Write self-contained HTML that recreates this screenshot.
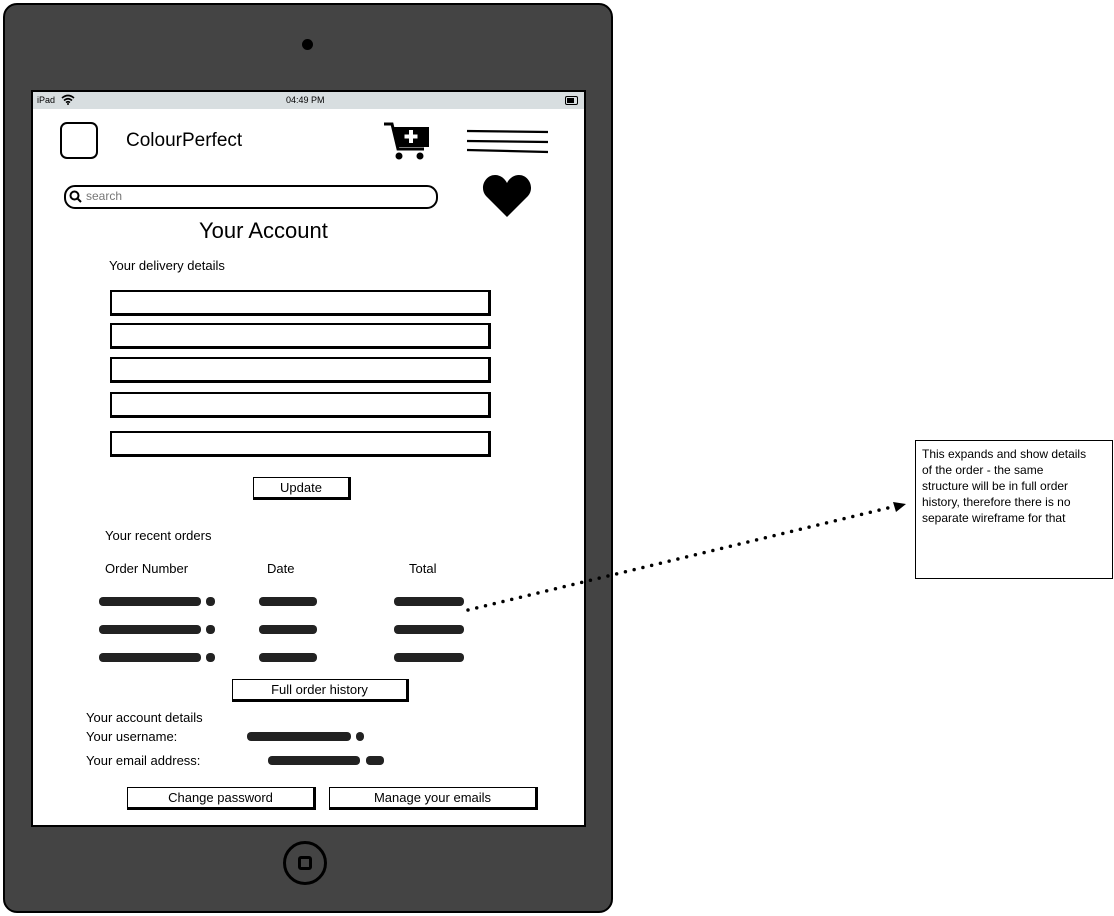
<!DOCTYPE html>
<html><head><style>
body{margin:0;width:1114px;height:916px;background:#fff;position:relative;font-family:"Liberation Sans",sans-serif;overflow:hidden}
.a{position:absolute}
.t{position:absolute;font-size:13px;color:#000;white-space:nowrap}
.in{position:absolute;left:110px;width:376px;height:21px;border:2px solid #000;border-right-width:3px;border-bottom-width:3px;background:#fff}
.btn{position:absolute;border:1.5px solid #000;border-right:3px solid #000;border-bottom:3px solid #000;background:#fff;font-size:13px;text-align:center;line-height:20px;height:19px}
.sc{position:absolute;height:9px;background:#222;border-radius:4px}
</style></head><body>
<div class="a" style="left:3px;top:3px;width:606px;height:906px;background:#444;border:2px solid #000;border-radius:14px"></div>
<div class="a" style="left:302px;top:39px;width:11px;height:11px;border-radius:50%;background:#000"></div>
<div class="a" style="left:283px;top:841px;width:44px;height:44px;border-radius:50%;border:3px solid #000;box-sizing:border-box"></div>
<div class="a" style="left:298px;top:856px;width:14px;height:14px;border-radius:3px;border:3px solid #000;box-sizing:border-box"></div>
<div class="a" style="left:31px;top:90px;width:551px;height:733px;background:#fff;border:2px solid #000"></div>
<div class="a" style="left:33px;top:92px;width:551px;height:17px;background:#d8dee0"></div>
<div class="t" style="left:37px;top:95px;font-size:9px">iPad</div>
<svg class="a" style="left:61px;top:94px" width="14" height="11" viewBox="0 0 14 11"><path d="M1 4Q7-1 13 4M3 6.5Q7 3 11 6.5M5 8.5Q7 7 9 8.5" stroke="#000" stroke-width="1.6" fill="none"/><circle cx="7" cy="10" r="1" fill="#000"/></svg>
<div class="t" style="left:286px;top:95px;font-size:9px">04:49 PM</div>
<div class="a" style="left:565px;top:96px;width:11px;height:7px;border:1px solid #000;border-radius:2px"><div style="margin:1px;width:7px;height:5px;background:#000"></div></div>
<div class="a" style="left:60px;top:122px;width:34px;height:33px;border:2.5px solid #000;border-radius:7px"></div>
<div class="t" style="left:126px;top:130px;font-size:19px">ColourPerfect</div>
<svg class="a" style="left:383px;top:121px" width="48" height="40" viewBox="0 0 48 40"><path d="M1 3H9L15 28H41" stroke="#000" stroke-width="3" fill="none"/><path d="M11 6H46V26H15Z" fill="#000"/><path d="M28 9V22M21.5 15.5H34.5" stroke="#fff" stroke-width="4"/><circle cx="16" cy="35" r="3.5" fill="#000"/><circle cx="37" cy="35" r="3.5" fill="#000"/></svg>
<svg class="a" style="left:466px;top:128px" width="84" height="28"><path d="M1 3L82 4M1 13L82 14M1 22L82 24" stroke="#000" stroke-width="2.2"/></svg>
<div class="a" style="left:64px;top:185px;width:370px;height:20px;border:2px solid #000;border-radius:11px"></div>
<svg class="a" style="left:69px;top:190px" width="14" height="14"><circle cx="5.5" cy="5.5" r="4" stroke="#000" stroke-width="2" fill="none"/><path d="M8.5 8.5L12 12" stroke="#000" stroke-width="2"/></svg>
<div class="t" style="left:86px;top:189px;font-size:12px;color:#777">search</div>
<svg class="a" style="left:482px;top:174px" width="50" height="44" viewBox="0 0 50 44"><path d="M25 43L4 22C-3 14 3 1 13 1C19 1 23 5 25 9C27 5 31 1 37 1C47 1 53 14 46 22Z" fill="#000"/></svg>
<div class="t" style="left:199px;top:218px;font-size:22px">Your Account</div>
<div class="t" style="left:109px;top:258px">Your delivery details</div>
<div class="in" style="top:290px"></div>
<div class="in" style="top:323px"></div>
<div class="in" style="top:357px"></div>
<div class="in" style="top:392px"></div>
<div class="in" style="top:431px"></div>
<div class="btn" style="left:253px;top:477px;width:94px">Update</div>
<div class="t" style="left:105px;top:528px">Your recent orders</div>
<div class="t" style="left:105px;top:561px">Order Number</div>
<div class="t" style="left:267px;top:561px">Date</div>
<div class="t" style="left:409px;top:561px">Total</div>
<div class="sc" style="left:99px;top:597px;width:102px"></div><div class="sc" style="left:206px;top:597px;width:9px"></div>
<div class="sc" style="left:259px;top:597px;width:58px"></div><div class="sc" style="left:394px;top:597px;width:70px"></div>
<div class="sc" style="left:99px;top:625px;width:102px"></div><div class="sc" style="left:206px;top:625px;width:9px"></div>
<div class="sc" style="left:259px;top:625px;width:58px"></div><div class="sc" style="left:394px;top:625px;width:70px"></div>
<div class="sc" style="left:99px;top:653px;width:102px"></div><div class="sc" style="left:206px;top:653px;width:9px"></div>
<div class="sc" style="left:259px;top:653px;width:58px"></div><div class="sc" style="left:394px;top:653px;width:70px"></div>
<div class="btn" style="left:232px;top:679px;width:173px">Full order history</div>
<div class="t" style="left:86px;top:710px">Your account details</div>
<div class="t" style="left:86px;top:729px">Your username:</div>
<div class="t" style="left:86px;top:753px">Your email address:</div>
<div class="sc" style="left:247px;top:732px;width:104px"></div><div class="sc" style="left:356px;top:732px;width:8px"></div>
<div class="sc" style="left:268px;top:756px;width:92px"></div><div class="sc" style="left:366px;top:756px;width:18px"></div>
<div class="btn" style="left:127px;top:787px;width:185px">Change password</div>
<div class="btn" style="left:329px;top:787px;width:205px">Manage your emails</div>
<svg class="a" style="left:0;top:0" width="1114" height="916"><path d="M468 610L900 505" stroke="#000" stroke-width="3.5" stroke-linecap="round" stroke-dasharray="0 9" fill="none"/><path d="M893 502L906 504L896 512" fill="#000"/></svg>
<div class="a" style="left:915px;top:440px;width:198px;height:139px;border:1.5px solid #000;box-sizing:border-box"></div>
<div class="t" style="left:922px;top:446px;font-size:12px;line-height:16px">This expands and show details<br>of the order - the same<br>structure will be in full order<br>history, therefore there is no<br>separate wireframe for that</div>
</body></html>
